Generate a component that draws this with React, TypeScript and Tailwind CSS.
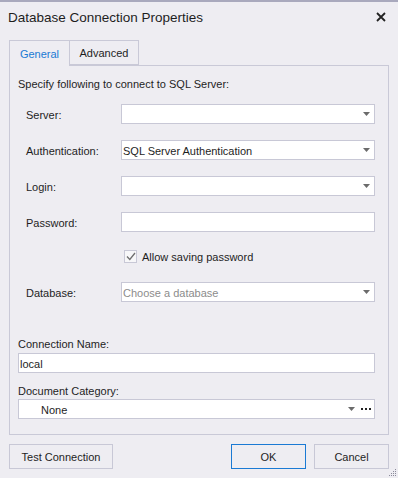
const font = { fontFamily: '"Liberation Sans", Arial, sans-serif' };

const Arrow = () => (
    <svg width="7" height="4" viewBox="0 0 7 4" className="shrink-0">
        <path d="M0 0H7L3.5 4Z" fill="#6b6b6b" />
    </svg>
);

const Combo = ({ value, placeholder }: { value?: string; placeholder?: string }) => (
    <div className="flex-1 h-5 bg-white border border-[#c8c8d6] flex items-center pl-[1px] pr-[4px]">
        <span className={`flex-1 text-[11px] pt-[2px] ${value ? "text-[#1e1e1e]" : "text-[#8c8c8c]"}`}>
            {value ?? placeholder}
        </span>
        <Arrow />
    </div>
);

const Field = ({ label, children }: { label: string; children: React.ReactNode }) => (
    <div className="flex items-center h-5">
        <span className="ml-[8px] w-[95px] text-[11px] pt-[2px] text-[#1e1e1e]">{label}</span>
        {children}
    </div>
);

const Button = ({ label, primary, className }: { label: string; primary?: boolean; className?: string }) => (
    <div
        className={`h-[25px] flex items-center justify-center text-[11px] pt-[1px] text-[#1e1e1e] border ${
            primary ? "border-[#1a7ad4]" : "border-[#c8c8d6]"
        } ${className ?? ""}`}
    >
        {label}
    </div>
);

export default function App() {
    return (
        <div className="w-[398px] h-[478px] bg-[#eeedf2] relative overflow-hidden" style={font}>
            {/* window edge */}
            <div className="h-[2px] bg-[#a9a9bd]" />

            {/* Title bar */}
            <div className="h-[38px] flex items-start justify-between pl-[8px] pr-[12px] pt-[6px]">
                <span className="text-[13.5px] text-[#1e1e1e]">Database Connection Properties</span>
                <svg width="10" height="10" viewBox="0 0 10 10" className="mt-[4px]">
                    <path d="M1 1L9 9M9 1L1 9" stroke="#222" strokeWidth="1.8" />
                </svg>
            </div>

            {/* Tabs */}
            <div className="flex ml-[9px] h-[25px]">
                <div className="w-[61px] border border-b-0 border-[#c9c9d7] flex items-center justify-center text-[11px] pt-[1px] text-[#1a7ad4] relative z-10 bg-[#eeedf2] h-[26px]">
                    General
                </div>
                <div className="w-[69px] border border-l-0 border-[#c9c9d7] flex items-center justify-center text-[11px] pt-[1px] text-[#1e1e1e] h-[25px]">
                    Advanced
                </div>
            </div>

            {/* Tab panel */}
            <div className="mx-[9px] w-[380px] h-[370px] border border-[#c9c9d7] pl-[8px] pr-[13px] pt-[10px]">
                <div className="text-[11px] text-[#1e1e1e] h-4 leading-4">Specify following to connect to SQL Server:</div>

                <div className="mt-[12px] flex flex-col gap-4">
                    <Field label="Server:">
                        <Combo />
                    </Field>
                    <Field label="Authentication:">
                        <Combo value="SQL Server Authentication" />
                    </Field>
                    <Field label="Login:">
                        <Combo />
                    </Field>
                    <Field label="Password:">
                        <div className="flex-1 h-5 bg-white border border-[#c8c8d6]" />
                    </Field>
                </div>

                <div className="mt-[14px] h-5 flex items-center pl-[106px] gap-[5px]">
                    <div className="w-[13px] h-[13px] border border-[#c8c8d6] bg-[#f7f7f9] flex items-center justify-center">
                        <svg width="10" height="9" viewBox="0 0 10 9">
                            <path d="M1 4.5L3.8 7.5L9 1" stroke="#6e6e6e" strokeWidth="1.3" fill="none" />
                        </svg>
                    </div>
                    <span className="text-[11px] pt-[2px] text-[#1e1e1e]">Allow saving password</span>
                </div>

                <div className="mt-4">
                    <Field label="Database:">
                        <Combo placeholder="Choose a database" />
                    </Field>
                </div>

                <div className="mt-[33px] h-4 leading-4 pt-[1px] text-[11px] text-[#1e1e1e]">Connection Name:</div>
                <div className="mt-[2px] h-5 bg-white border border-[#c8c8d6] flex items-center pl-[1px] pt-[2px] text-[11px] text-[#1e1e1e]">
                    local
                </div>

                <div className="mt-[9px] h-4 leading-4 pt-[1px] text-[11px] text-[#1e1e1e]">Document Category:</div>
                <div className="mt-[1px] h-5 bg-white border border-[#c8c8d6] flex items-center pl-[22px] pr-[3px] text-[11px] text-[#1e1e1e]">
                    <span className="flex-1 pt-[2px]">None</span>
                    <Arrow />
                    <span className="ml-[6px] flex gap-[2px]">
                        <i className="w-[2px] h-[2px] bg-[#222]" />
                        <i className="w-[2px] h-[2px] bg-[#222]" />
                        <i className="w-[2px] h-[2px] bg-[#222]" />
                    </span>
                </div>
            </div>

            {/* Buttons */}
            <div className="mt-[9px] mx-[9px] flex">
                <Button label="Test Connection" className="w-[104px]" />
                <div className="flex-1" />
                <Button label="OK" primary className="w-[75px]" />
                <Button label="Cancel" className="w-[75px] ml-[8px]" />
            </div>

            {/* Resize grip */}
            <svg width="8" height="8" viewBox="0 0 8 8" className="absolute right-[1px] bottom-[1px]">
                <rect x="6" y="0" width="1" height="1" fill="#8a8a9a" />
                <rect x="4" y="2" width="1" height="1" fill="#8a8a9a" />
                <rect x="6" y="2" width="1" height="1" fill="#8a8a9a" />
                <rect x="2" y="4" width="1" height="1" fill="#8a8a9a" />
                <rect x="4" y="4" width="1" height="1" fill="#8a8a9a" />
                <rect x="6" y="4" width="1" height="1" fill="#8a8a9a" />
                <rect x="0" y="6" width="1" height="1" fill="#8a8a9a" />
                <rect x="2" y="6" width="1" height="1" fill="#8a8a9a" />
                <rect x="4" y="6" width="1" height="1" fill="#8a8a9a" />
                <rect x="6" y="6" width="1" height="1" fill="#8a8a9a" />
            </svg>
        </div>
    );
}
